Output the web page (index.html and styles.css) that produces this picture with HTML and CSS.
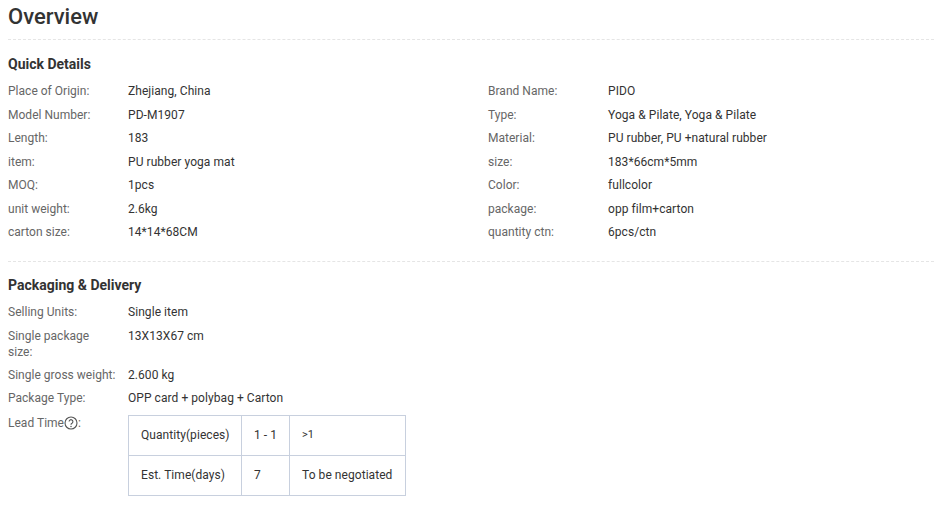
FILE: index.html
```html
<!DOCTYPE html>
<html lang="en">
<head>
<meta charset="utf-8">
<title>Overview</title>
<link rel="stylesheet" href="styles.css">
</head>
<body>
<h1 class="title">Overview</h1>
<section class="section section-first">
  <h2 class="heading">Quick Details</h2>
  <div class="details">
    <div class="pair"><span class="label">Place of Origin:</span><span class="value">Zhejiang, China</span></div>
    <div class="pair"><span class="label">Brand Name:</span><span class="value">PIDO</span></div>
    <div class="pair"><span class="label">Model Number:</span><span class="value">PD-M1907</span></div>
    <div class="pair"><span class="label">Type:</span><span class="value">Yoga &amp; Pilate, Yoga &amp; Pilate</span></div>
    <div class="pair"><span class="label">Length:</span><span class="value">183</span></div>
    <div class="pair"><span class="label">Material:</span><span class="value">PU rubber, PU +natural rubber</span></div>
    <div class="pair"><span class="label">item:</span><span class="value">PU rubber yoga mat</span></div>
    <div class="pair"><span class="label">size:</span><span class="value">183*66cm*5mm</span></div>
    <div class="pair"><span class="label">MOQ:</span><span class="value">1pcs</span></div>
    <div class="pair"><span class="label">Color:</span><span class="value">fullcolor</span></div>
    <div class="pair"><span class="label">unit weight:</span><span class="value">2.6kg</span></div>
    <div class="pair"><span class="label">package:</span><span class="value">opp film+carton</span></div>
    <div class="pair"><span class="label">carton size:</span><span class="value">14*14*68CM</span></div>
    <div class="pair"><span class="label">quantity ctn:</span><span class="value">6pcs/ctn</span></div>
  </div>
</section>
<section class="section">
  <h2 class="heading">Packaging &amp; Delivery</h2>
  <div class="rows">
    <div class="pair"><span class="label">Selling Units:</span><span class="value">Single item</span></div>
    <div class="pair"><span class="label">Single package<br>size:</span><span class="value">13X13X67 cm</span></div>
    <div class="pair"><span class="label">Single gross weight:</span><span class="value">2.600 kg</span></div>
    <div class="pair pair-type"><span class="label">Package Type:</span><span class="value">OPP card + polybag + Carton</span></div>
    <div class="pair pair-lead">
      <span class="label">Lead Time<svg class="help" width="14" height="14" viewBox="0 0 14 14" aria-hidden="true"><circle cx="7" cy="7" r="6" fill="none" stroke="#555" stroke-width="1.1"/><path d="M5.1 5.6a1.9 1.9 0 1 1 2.9 1.6c-.7.4-1 .8-1 1.5" fill="none" stroke="#555" stroke-width="1.1"/><circle cx="7" cy="10.4" r=".75" fill="#555"/></svg>:</span>
      <table class="lead">
        <tr><td class="c1">Quantity(pieces)</td><td class="c2">1 - 1</td><td class="c3 small">&gt;1</td></tr>
        <tr><td class="c1">Est. Time(days)</td><td class="c2">7</td><td class="c3">To be negotiated</td></tr>
      </table>
    </div>
  </div>
</section>
</body>
</html>
```
FILE: styles.css
```css
* { box-sizing: border-box; }
html, body { margin: 0; padding: 0; }
body {
  background: #fff;
  color: #333;
  font-family: Roboto, "Liberation Sans", sans-serif;
  font-size: 12px;
  line-height: 16px;
  letter-spacing: .06px;
  padding: 0 7px 0 8px;
}
.title {
  margin: 0;
  padding: 4px 0 9px;
  font-size: 22px;
  line-height: 26px;
  font-weight: 500;
  letter-spacing: 0;
  color: #333;
  border-bottom: 1px dashed #e5e5e5;
}
.section { padding-top: 15px; }
.section + .section { border-top: 1px dashed #e5e5e5; margin-top: 21px; padding-top: 14px; }
.heading {
  margin: 0 0 10px;
  font-size: 14px;
  line-height: 18px;
  font-weight: 700;
  letter-spacing: 0;
  color: #333;
}
.details {
  display: grid;
  grid-template-columns: 480px 1fr;
  row-gap: 7.5px;
}
.rows { display: flex; flex-direction: column; gap: 7.6px; }
.pair { display: flex; }
.pair-type { margin-top: -1px; }
.pair-lead { margin-top: 2px; }
.label { width: 120px; flex: none; color: #666; white-space: nowrap; letter-spacing: .02px; }
.value { color: #333; }
.help { vertical-align: -3px; }
.lead {
  border-collapse: collapse;
  table-layout: fixed;
  width: 277px;
  color: #333;
  font-size: 12px;
}
.lead td {
  border: 1px solid #c8d0de;
  height: 40px;
  padding: 0 0 2px 12px;
  white-space: nowrap;
}
.c1 { width: 113px; }
.c2 { width: 48px; }
.c3 { width: 116px; }
.small { font-size: 11px; }
```
